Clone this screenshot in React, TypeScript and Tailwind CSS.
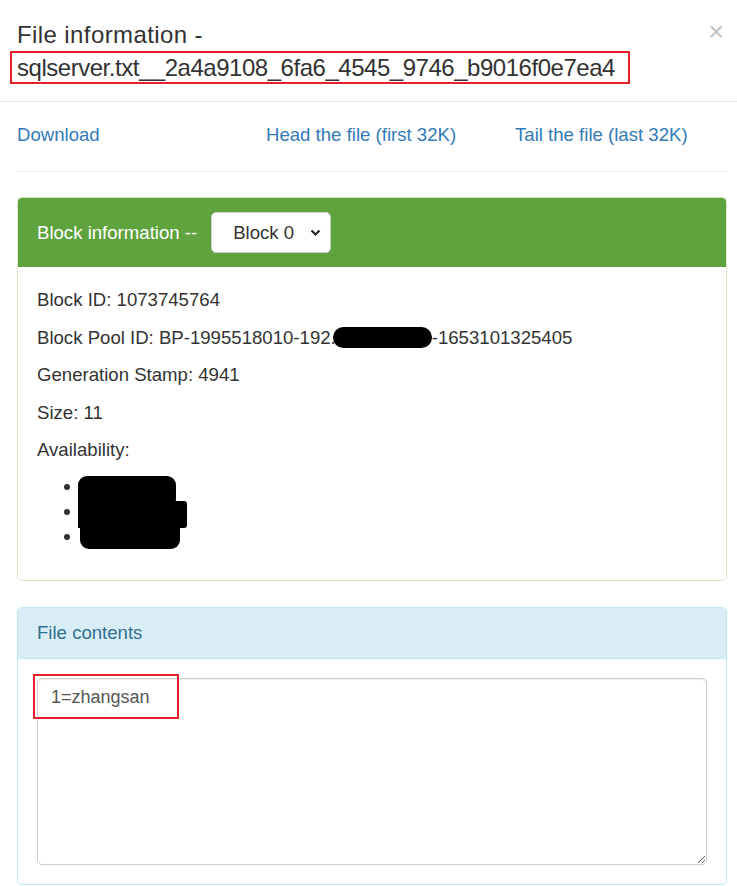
import React from "react"

const font = { fontFamily: '"Liberation Sans", Arial, sans-serif' }

const InfoLine = ({ children }: { children: React.ReactNode }) => (
  <p className="h-[26px] leading-[26px] mb-[11.5px]">{children}</p>
)

const App = () => {
  return (
    <div style={font} className="w-[737px] h-[886px] overflow-hidden bg-white text-[#333]">
      {/* modal header */}
      <div className="flex justify-between border-b border-[#e5e5e5] pl-[17px] pr-[13px] pt-[18px] pb-[17px]">
        <div className="text-[24px] leading-[33px] text-[#333]">
          <div className="tracking-[0.4px]">File information -</div>
          <div>
            <span className="inline-block -ml-[7px] pl-[5px] pr-[13px] h-[33px] leading-[30px] border-2 border-[#e5202e] tracking-[-0.47px]">
              sqlserver.txt__2a4a9108_6fa6_4545_9746_b9016f0e7ea4
            </span>
          </div>
        </div>
        <button className="self-start text-[27px] leading-[28px] text-[#c4c4c4]">×</button>
      </div>

      {/* modal body */}
      <div className="pl-[17px] pr-[10px] pt-[20px]">
        <div className="grid grid-cols-[249px_249px_1fr] text-[18.6px] leading-[26px] text-[#337ab7]">
          <a href="#">Download</a>
          <a href="#">Head the file (first 32K)</a>
          <a href="#">Tail the file (last 32K)</a>
        </div>
        <hr className="mt-[23px] mb-[25px] border-t border-[#eee]" />

        {/* block panel */}
        <div className="border border-[#d6e9c6] rounded-[5px] overflow-hidden">
          <div className="flex items-center gap-[14px] h-[69px] bg-[#5fa33f] px-[19px] text-white text-[18.6px]">
            <span>Block information --</span>
            <div className="flex items-center justify-between w-[120px] h-[41px] rounded-[5px] border border-[#ccc] bg-white pl-[21px] pr-[9px] text-[#333]">
              <span>Block 0</span>
              <svg width="11" height="8" viewBox="0 0 11 8">
                <polyline points="1.5,1.5 5.5,5.5 9.5,1.5" fill="none" stroke="#222" strokeWidth="2.2" />
              </svg>
            </div>
          </div>
          <div className="px-[19px] pt-[20px] pb-[20px] text-[18.6px]">
            <InfoLine>Block ID: 1073745764</InfoLine>
            <InfoLine>
              Block Pool ID: BP-1995518010-192.
              <span className="inline-block align-middle w-[99px] h-[21px] -ml-[3px] -mt-[3px] rounded-full bg-black" />
              -1653101325405
            </InfoLine>
            <InfoLine>Generation Stamp: 4941</InfoLine>
            <InfoLine>Size: 11</InfoLine>
            <InfoLine>Availability:</InfoLine>
            <ul className="list-disc pl-[46px] mb-[10px] marker:text-[20px]">
              <li className="h-[25px] leading-[22px]">
                <span className="inline-block align-top -ml-[5px] w-[98px] h-[27px] rounded-t-[9px] rounded-br-[4px] bg-black" />
              </li>
              <li className="h-[25px] leading-[22px]">
                <span className="inline-block align-top -ml-[5px] w-[109px] h-[27px] rounded-r-[3px] bg-black" />
              </li>
              <li className="h-[25px] leading-[22px]">
                <span className="inline-block align-top -ml-[3px] w-[100px] h-[23px] rounded-b-[9px] bg-black" />
              </li>
            </ul>
          </div>
        </div>

        {/* file contents panel */}
        <div className="mt-[26px] border border-[#bce8f1] rounded-[5px] overflow-hidden">
          <div className="bg-[#d9edf7] border-b border-[#bce8f1] h-[51px] flex items-center px-[19px] text-[18.6px] text-[#31708f]">
            File contents
          </div>
          <div className="relative px-[19px] pt-[19px] pb-[19px]">
            <textarea
              readOnly
              defaultValue="1=zhangsan"
              style={font}
              className="block w-full h-[187px] rounded-[5px] border border-[#ccc] px-[13px] pt-[6px] text-[18px] leading-[24px] text-[#555] shadow-[inset_0_1px_1px_rgba(0,0,0,0.075)] outline-none"
            />
            <div className="absolute left-[15px] top-[15px] w-[146px] h-[45px] border-2 border-[#e5202e]" />
          </div>
        </div>
      </div>
    </div>
  )
}

export default App
